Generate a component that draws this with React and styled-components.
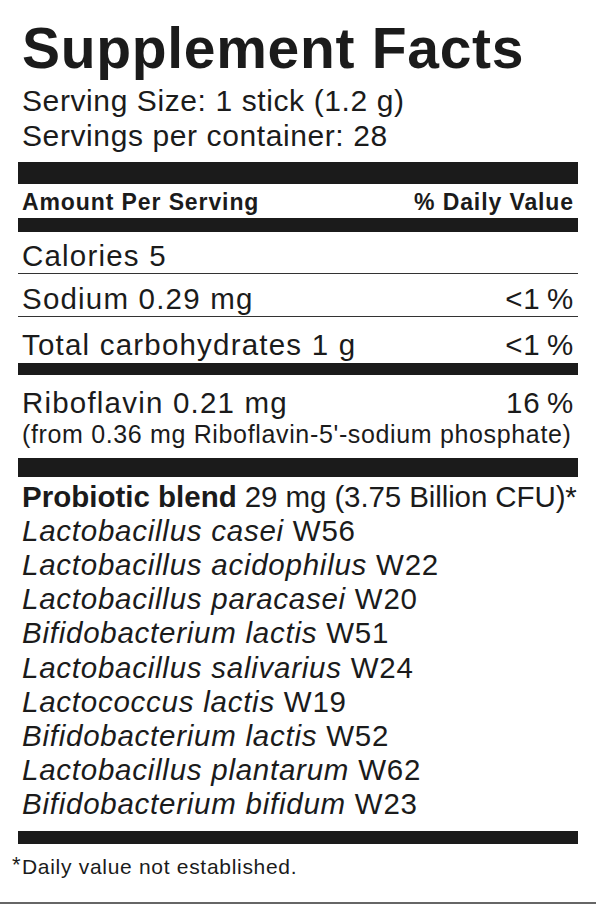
import styled, { createGlobalStyle } from "styled-components";

const GlobalStyle = createGlobalStyle`
  body {
    margin: 0;
    background: #fff;
    color: #1b1b1b;
    font-family: "Liberation Sans", Arial, Helvetica, sans-serif;
  }
`;

const Page = styled.div`
  width: 596px;
`;

const Label = styled.div`
  width: 560px;
  padding: 17px 18px 0 18px;
`;

const Title = styled.h1`
  margin: 0;
  padding-left: 4px;
  font-size: 57px;
  line-height: 62px;
  font-weight: 700;
  letter-spacing: 0.7px;
`;

const ServingLine = styled.div`
  padding-left: 4px;
  font-size: 30px;
  line-height: 35px;
  letter-spacing: 0.6px;
`;

const Servings = styled.div`
  margin-top: 4px;
  margin-bottom: 9px;
`;

const ThickBar = styled.div`
  height: ${(p) => p.$h}px;
  background: #1b1b1b;
  margin-top: ${(p) => p.$mt || 0}px;
`;

const HeaderRow = styled.div`
  display: flex;
  justify-content: space-between;
  padding: 2px 4px 0 4px;
  font-size: 23px;
  line-height: 32px;
  font-weight: 700;
  letter-spacing: 0.9px;
`;

const NutrientRow = styled.div`
  display: flex;
  justify-content: space-between;
  padding: ${(p) => p.$pt}px 4px 0 4px;
  font-size: 29.5px;
  line-height: ${(p) => p.$lh || 35}px;
  letter-spacing: 1.2px;
  border-bottom: ${(p) => (p.$divider ? "1px solid #333" : "none")};
`;

const Percent = styled.span`
  letter-spacing: 0.75px;
`;

const Note = styled.div`
  padding: 0 4px 10px 4px;
  font-size: 25px;
  line-height: 28px;
  letter-spacing: 0.65px;
`;

const Blend = styled.div`
  padding: 2.5px 4px 9.5px 4px;
  font-size: 29.5px;
  line-height: 34.2px;
  letter-spacing: 0.75px;
`;

const BlendLine = styled.div`
  white-space: nowrap;
  letter-spacing: -0.1px;
  b {
    font-weight: 700;
    letter-spacing: 0;
  }
`;

const Strain = styled.div`
  white-space: nowrap;
  em {
    font-style: italic;
  }
`;

const Footnote = styled.div`
  display: flex;
  align-items: flex-start;
  margin-left: -6px;
  padding-top: 10px;
  font-size: 21px;
  line-height: 26px;
  letter-spacing: 0.7px;
`;

const Star = styled.span`
  font-size: 22px;
  line-height: 22px;
  width: 10px;
  letter-spacing: 0;
`;

const BottomRule = styled.div`
  margin-top: 22px;
  height: 2px;
  background: #666;
`;

const strains = [
  ["Lactobacillus casei", "W56"],
  ["Lactobacillus acidophilus", "W22"],
  ["Lactobacillus paracasei", "W20"],
  ["Bifidobacterium lactis", "W51"],
  ["Lactobacillus salivarius", "W24"],
  ["Lactococcus lactis", "W19"],
  ["Bifidobacterium lactis", "W52"],
  ["Lactobacillus plantarum", "W62"],
  ["Bifidobacterium bifidum", "W23"],
];

export default function App() {
  return (
    <>
      <GlobalStyle />
      <Page>
        <Label>
          <Title>Supplement Facts</Title>
          <Servings>
            <ServingLine>Serving Size: 1 stick (1.2 g)</ServingLine>
            <ServingLine>Servings per container: 28</ServingLine>
          </Servings>
          <ThickBar $h={22} />
          <HeaderRow>
            <span>Amount Per Serving</span>
            <span>% Daily Value</span>
          </HeaderRow>
          <ThickBar $h={14} />
          <NutrientRow $pt={6} $divider>
            <span>Calories 5</span>
          </NutrientRow>
          <NutrientRow $pt={7} $divider>
            <span>Sodium 0.29 mg</span>
            <Percent>&lt;1&thinsp;%</Percent>
          </NutrientRow>
          <NutrientRow $pt={10}>
            <span>Total carbohydrates 1 g</span>
            <Percent>&lt;1&thinsp;%</Percent>
          </NutrientRow>
          <ThickBar $h={12} $mt={1} />
          <NutrientRow $pt={11} $lh={34}>
            <span>Riboflavin 0.21 mg</span>
            <Percent>16&thinsp;%</Percent>
          </NutrientRow>
          <Note>(from 0.36 mg Riboflavin-5'-sodium phosphate)</Note>
          <ThickBar $h={19} />
          <Blend>
            <BlendLine>
              <b>Probiotic blend</b> 29 mg (3.75 Billion CFU)*
            </BlendLine>
            {strains.map(([name, code], i) => (
              <Strain key={i}>
                <em>{name}</em> {code}
              </Strain>
            ))}
          </Blend>
          <ThickBar $h={13} />
          <Footnote>
            <Star>*</Star>
            <span>Daily value not established.</span>
          </Footnote>
        </Label>
        <BottomRule />
      </Page>
    </>
  );
}
